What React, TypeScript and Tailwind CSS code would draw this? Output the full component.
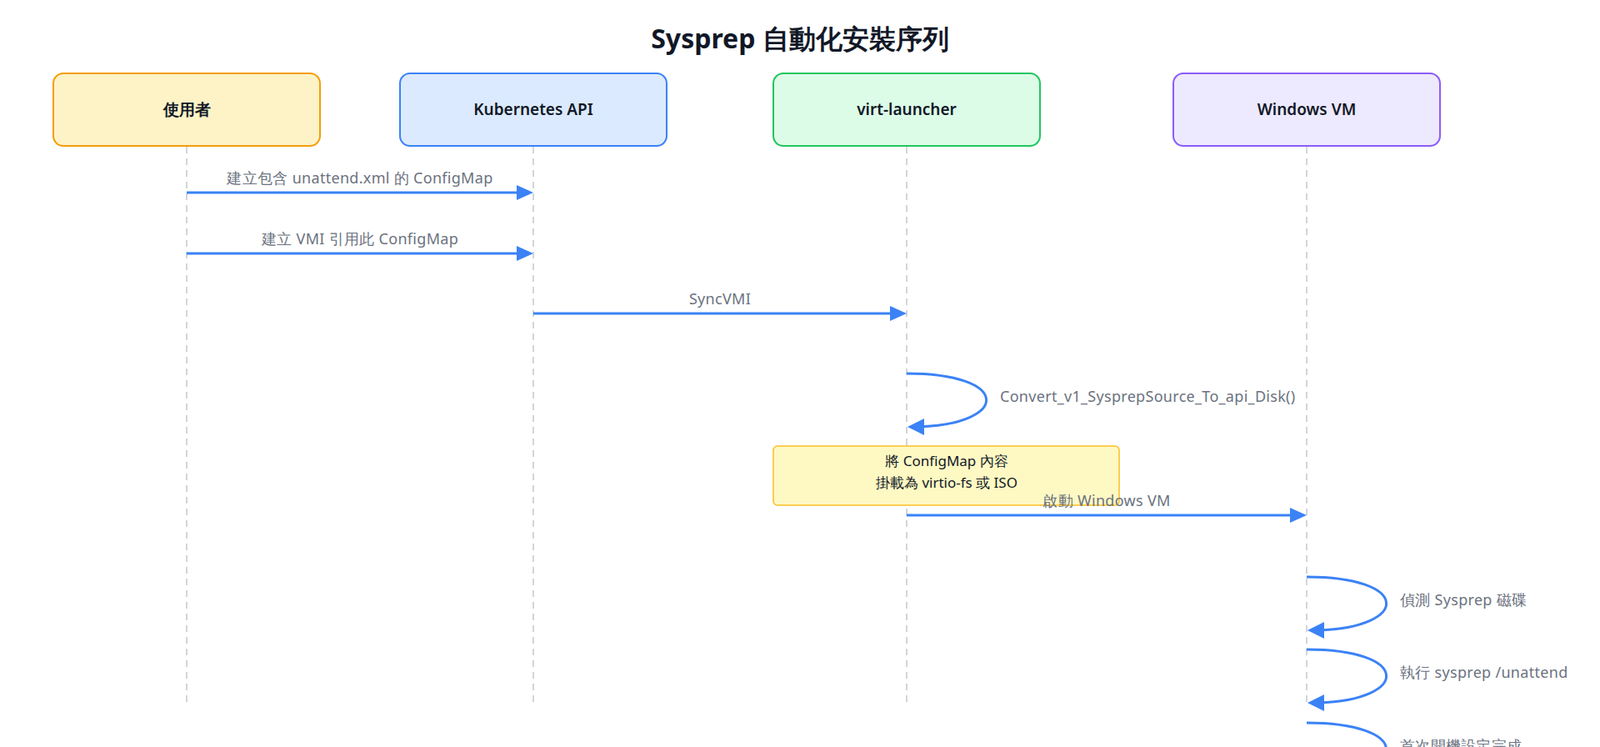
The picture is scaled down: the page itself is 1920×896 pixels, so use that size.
import React from "react";

const actors = [
  { x: 64, label: "使用者", fill: "#fef3c7", stroke: "#f59e0b" },
  { x: 480, label: "Kubernetes API", fill: "#dbeafe", stroke: "#3b82f6" },
  { x: 928, label: "virt-launcher", fill: "#dcfce7", stroke: "#22c55e" },
  { x: 1408, label: "Windows VM", fill: "#ede9fe", stroke: "#8b5cf6" },
];
const L = [224, 640, 1088, 1568];
const msgs = [
  { a: 0, b: 1, y: 231, t: "建立包含 unattend.xml 的 ConfigMap" },
  { a: 0, b: 1, y: 304, t: "建立 VMI 引用此 ConfigMap" },
  { a: 1, b: 2, y: 376, t: "SyncVMI" },
  { a: 2, b: 3, y: 618, t: "啟動 Windows VM" },
];
const loops = [
  { l: 2, y: 448, t: "Convert_v1_SysprepSource_To_api_Disk()" },
  { l: 3, y: 692, t: "偵測 Sysprep 磁碟" },
  { l: 3, y: 779, t: "執行 sysprep /unattend" },
  { l: 3, y: 867, t: "首次開機設定完成" },
];

export default function App() {
  return (
    <div className="w-[1920px] h-[896px] bg-white overflow-hidden font-['Inter','Noto_Sans_CJK_TC',sans-serif]">
      <svg width="1920" height="896">
        <text x="960" y="58" textAnchor="middle" fontSize="32" fontWeight="700" fill="#111827">
          Sysprep 自動化安裝序列
        </text>
        {L.map((x, i) => (
          <line key={i} x1={x} y1={176} x2={x} y2={842} stroke="#d1d5db" strokeWidth="2" strokeDasharray="8 6" />
        ))}
        {actors.map((a, i) => (
          <g key={i}>
            <rect x={a.x} y={88} width={320} height={87} rx={12} fill={a.fill} stroke={a.stroke} strokeWidth="2" />
            <text x={a.x + 160} y={138} textAnchor="middle" fontSize="19" fontWeight="600" fill="#111827">
              {a.label}
            </text>
          </g>
        ))}
        <rect x={928} y={535} width={415} height={71} rx={5} fill="#fef9c3" stroke="#fbbf24" strokeWidth="1.5" />
        <text x={1136} y={559} textAnchor="middle" fontSize="17" fill="#111827">將 ConfigMap 內容</text>
        <text x={1136} y={585} textAnchor="middle" fontSize="17" fill="#111827">掛載為 virtio-fs 或 ISO</text>
        {msgs.map((m, i) => {
          const x1 = L[m.a], x2 = L[m.b];
          return (
            <g key={i}>
              <line x1={x1} y1={m.y} x2={x2 - 14} y2={m.y} stroke="#3b82f6" strokeWidth="3" />
              <polygon points={`${x2},${m.y} ${x2 - 20},${m.y - 9} ${x2 - 20},${m.y + 9}`} fill="#3b82f6" />
              <text x={(x1 + x2) / 2} y={m.y - 11} textAnchor="middle" fontSize="18" letterSpacing="0.3" fill="#6b7280">
                {m.t}
              </text>
            </g>
          );
        })}
        {loops.map((p, i) => {
          const x = L[p.l], y1 = p.y, y2 = p.y + 64;
          return (
            <g key={i}>
              <path d={`M ${x} ${y1} C ${x + 125} ${y1}, ${x + 125} ${y2 - 4}, ${x + 14} ${y2}`} fill="none" stroke="#3b82f6" strokeWidth="3" />
              <polygon points={`${x + 1},${y2} ${x + 21},${y2 - 10} ${x + 21},${y2 + 10}`} fill="#3b82f6" />
              <text x={x + 112} y={y1 + 34} fontSize="18" letterSpacing="0.3" fill="#6b7280">
                {p.t}
              </text>
            </g>
          );
        })}
      </svg>
    </div>
  );
}
